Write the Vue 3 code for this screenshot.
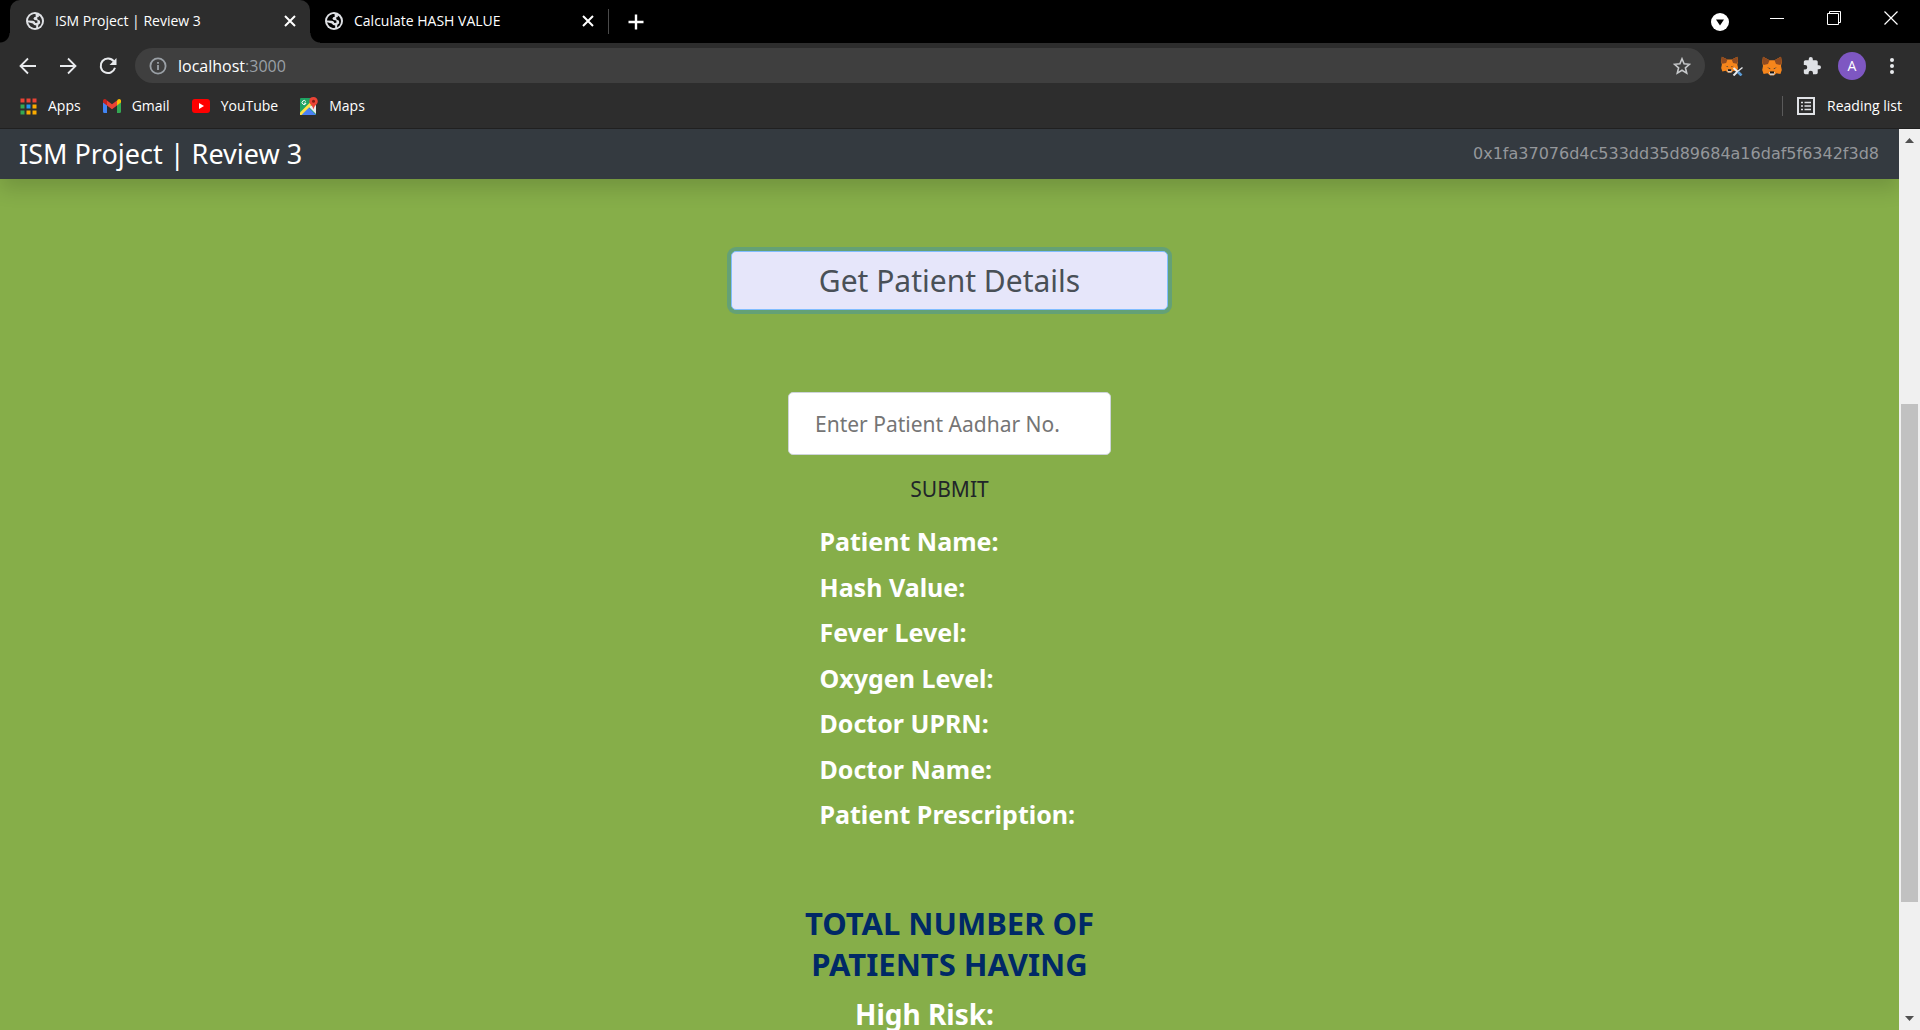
<script setup>
const tabs = [
  { title: 'ISM Project | Review 3', active: true },
  { title: 'Calculate HASH VALUE', active: false },
]
const fields = [
  'Patient Name:',
  'Hash Value:',
  'Fever Level:',
  'Oxygen Level:',
  'Doctor UPRN:',
  'Doctor Name:',
  'Patient Prescription:',
]
const appDots = ['#ea4335', '#ea4335', '#ea4335', '#34a853', '#2196f3', '#fbab00', '#34a853', '#fbab00', '#fbab00']
</script>

<template>
  <div class="browser">
    <header class="tabstrip">
      <div v-for="tab in tabs" :key="tab.title" class="tab" :class="{ active: tab.active }">
        <svg width="18" height="18" viewBox="0 0 18 18">
          <circle cx="9" cy="9" r="9" fill="#dfe1e5" />
          <g :fill="tab.active ? '#2d2d2d' : '#000'">
            <path d="M9.500 2C5.500 1.800 2.400 4.600 2 8.400l4.600.4c1.600.2 2.600.8 2.600 2.200l2.200-.2V8.600L8.600 8 7.400 6.800l.8-1.600 1.600-.4z" />
            <path d="M2.200 10.200C2.900 13.600 5.600 16 9 16l1.200-.2v-2.400l-2-.4-1.400-1.600z" />
            <path d="M12.800 3.400c2 1.300 3.200 3.300 3.200 5.800 0 3-1.700 5.300-4 6.300l.4-2.700 1.800-1.600-.2-2.400-2.400-1.400-.6-1.800 1.800-.6z" />
          </g>
        </svg>
        <span class="tab-title">{{ tab.title }}</span>
        <button class="icon-btn" type="button" aria-label="Close tab">
          <svg width="12" height="12" viewBox="0 0 12 12" stroke="#fff" stroke-width="2"><path d="M1 1l10 10M11 1L1 11" /></svg>
        </button>
      </div>
      <div class="tab-sep"></div>
      <button class="icon-btn new-tab" type="button" aria-label="New tab">
        <svg width="16" height="16" viewBox="0 0 16 16" stroke="#fff" stroke-width="2.400"><path d="M8 .5v15M.5 8h15" /></svg>
      </button>
      <div class="window-controls">
        <button class="icon-btn search-tabs" type="button" aria-label="Search tabs">
          <svg width="18" height="18" viewBox="0 0 18 18"><circle cx="9" cy="9" r="9" fill="#fff" /><path d="M5 6.500h8l-4 6z" fill="#000" /></svg>
        </button>
        <button class="icon-btn" type="button" aria-label="Minimize">
          <svg width="14" height="14" viewBox="0 0 14 14" stroke="#fff"><path d="M0 7.500h14" /></svg>
        </button>
        <button class="icon-btn" type="button" aria-label="Restore">
          <svg width="14" height="14" viewBox="0 0 14 14" fill="none" stroke="#fff"><path d="M.5 2.500h11v11H.5zM2.500 2.500v-2h11v11h-2" /></svg>
        </button>
        <button class="icon-btn" type="button" aria-label="Close">
          <svg width="14" height="14" viewBox="0 0 14 14" stroke="#fff" stroke-width="1.200"><path d="M.5.5l13 13M13.500.5l-13 13" /></svg>
        </button>
      </div>
    </header>

    <div class="toolbar">
      <nav class="history">
        <button class="icon-btn" type="button" aria-label="Back">
          <svg width="18" height="18" viewBox="0 0 18 18" fill="none" stroke="#e8eaed" stroke-width="1.800"><path d="M17 9H2M9 1.500L1.500 9 9 16.500" /></svg>
        </button>
        <button class="icon-btn" type="button" aria-label="Forward">
          <svg width="18" height="18" viewBox="0 0 18 18" fill="none" stroke="#e8eaed" stroke-width="1.800"><path d="M1 9h15M9 1.500L16.500 9 9 16.500" /></svg>
        </button>
        <button class="icon-btn" type="button" aria-label="Reload">
          <svg width="18" height="18" viewBox="0 0 18 18"><path d="M14.800 4.300A7.300 7.300 0 1 0 16 10.800" fill="none" stroke="#e8eaed" stroke-width="2" /><path d="M17.500 1v7h-7z" fill="#e8eaed" /></svg>
        </button>
      </nav>
      <div class="omnibox">
        <svg width="18" height="18" viewBox="0 0 18 18" fill="none" stroke="#9aa0a6" stroke-width="1.800"><circle cx="9" cy="9" r="7.600" /><path d="M9 8v5M9 5v1.800" /></svg>
        <span class="url">localhost<span class="port">:3000</span></span>
        <button class="icon-btn" type="button" aria-label="Bookmark this tab">
          <svg width="18" height="18" viewBox="0 0 18 18" fill="none" stroke="#c6c8ca" stroke-width="1.600"><path d="M9 1.800l2.100 5 5.400.5-4.100 3.500 1.300 5.300L9 13.300l-4.700 2.800 1.300-5.300L1.500 7.300l5.400-.5z" /></svg>
        </button>
      </div>
      <div class="extensions">
        <button v-for="n in 2" :key="n" class="icon-btn" type="button" aria-label="MetaMask">
          <svg width="22" height="20" viewBox="0 0 22 20">
            <g :transform="n === 1 ? 'scale(0.86)' : 'translate(1 0)'">
              <path d="M1 .8l6.500 3.400h5L19 .8l.8 5.200-.8 4 .8 4-1.400 4-3.900-.8-2.300 2H7.800l-2.300-2-3.900.8L.2 14 1 10 .2 6z" fill="#f6851b" />
              <path d="M1 .8l6.500 3.400L6 8 1.600 9 .2 6zM19 .8l-6.500 3.400L14 8l4.400 1 1.400-3z" fill="#8f4a20" />
              <path d="M5 11.200l3.200 1v1zM15 11.200l-3.200 1v1z" fill="#2b3340" />
              <path d="M7 16h6l-1 3.200H8z" fill="#d9cfc7" />
              <path d="M8 15.400h4v2H8z" fill="#161616" />
            </g>
            <g v-if="n === 1" fill="none" stroke-width="2"><path d="M12.500 19.500l4-4" stroke="#e8eaed" /><path d="M16.500 15.500l5-4" stroke="#e8eaed" stroke-width="1.400" /><path d="M12.500 12l4.500 4" stroke="#e8eaed" /><path d="M17 16l3.500 3.500" stroke="#5b9bd5" stroke-width="2.600" /></g>
          </svg>
        </button>
        <button class="icon-btn" type="button" aria-label="Extensions">
          <svg width="18" height="18" viewBox="1 1 22 22" fill="#dfe1e5"><path d="M20.500 11H19V7c0-1.100-.9-2-2-2h-4V3.500a2.500 2.500 0 0 0-5 0V5H4c-1.100 0-2 .9-2 2v3.800h1.500a2.700 2.700 0 0 1 0 5.400H2V20c0 1.100.9 2 2 2h3.800v-1.500a2.700 2.700 0 0 1 5.400 0V22H17c1.100 0 2-.9 2-2v-4h1.500a2.500 2.500 0 0 0 0-5z" /></svg>
        </button>
        <button class="icon-btn avatar" type="button">A</button>
        <button class="icon-btn" type="button" aria-label="Menu">
          <svg width="4" height="16" viewBox="0 0 4 16" fill="#e8eaed"><circle cx="2" cy="2" r="2" /><circle cx="2" cy="8" r="2" /><circle cx="2" cy="14" r="2" /></svg>
        </button>
      </div>
    </div>

    <nav class="bookmarks">
      <a href="#">
        <svg width="17" height="17" viewBox="0 0 17 17"><rect v-for="(c, i) in appDots" :key="i" :x="(i % 3) * 6 + 0.500" :y="Math.floor(i / 3) * 6 + 0.500" width="4" height="4" :fill="c" /></svg>
        Apps
      </a>
      <a href="#">
        <svg width="18" height="14" viewBox="0 0 18 14"><path d="M0 3v9.500c0 .8.500 1.500 1.300 1.500H4V6z" fill="#4285f4" /><path d="M18 3v9.500c0 .8-.5 1.500-1.300 1.500H14V6z" fill="#34a853" /><path d="M4 1.500l5 3.800 5-3.800v5L9 10.300 4 6.500z" fill="#ea4335" /><path d="M0 3V2C0 .2 2-.6 3.400.8L4 1.500v5L0 3.500z" fill="#c5221f" /><path d="M18 3V2c0-1.800-2-2.600-3.400-1.200l-.6.7v5l4-3z" fill="#fbbc04" /></svg>
        Gmail
      </a>
      <a href="#">
        <svg width="18" height="14" viewBox="0 0 18 14"><rect width="18" height="14" rx="3" fill="#f00" /><path d="M7 4l5 3-5 3z" fill="#fff" /></svg>
        YouTube
      </a>
      <a href="#">
        <svg width="18" height="18" viewBox="0 0 18 18"><rect y="1" width="16" height="17" rx="1" fill="#1ea362" /><path d="M16 8v9L8 9z" fill="#e8eaed" /><path d="M1 18l7.500-7.500L16 18z" fill="#4a80f5" /><path d="M0 15.500L11 4.500l2 2L1.500 18H0z" fill="#ffe047" /><path d="M13.500 0A4.300 4.300 0 0 0 9.300 4.300c0 3 3 3.500 4.200 8.200 1.200-4.700 4.300-5.200 4.300-8.200A4.300 4.300 0 0 0 13.500 0z" fill="#ea4335" /><circle cx="13.500" cy="4.200" r="1.500" fill="#7f1d14" /><path d="M5.800 4.500a2 2 0 1 0 .2 1.700H4" fill="none" stroke="#fff" /></svg>
        Maps
      </a>
      <button class="reading-list" type="button">
        <svg width="18" height="18" viewBox="0 0 18 18" fill="none" stroke="#dfe1e5"><path d="M1 1h16v16H1z" stroke-width="2" /><path d="M4 5.500h2M4 9h2M4 12.500h2M7.500 5.500H14M7.500 9H14M7.500 12.500H14" stroke-width="1.600" /></svg>
        Reading list
      </button>
    </nav>

    <div class="viewport">
      <div class="page">
        <nav class="navbar">
          <a class="brand" href="#">ISM Project | Review 3</a>
          <small class="account">0x1fa37076d4c533dd35d89684a16daf5f6342f3d8</small>
        </nav>
        <main class="content">
          <button class="details-btn" type="button">Get Patient Details</button>
          <form class="lookup" @submit.prevent>
            <input class="aadhar" type="text" placeholder="Enter Patient Aadhar No." aria-label="Enter Patient Aadhar No." />
            <button class="submit" type="submit">SUBMIT</button>
          </form>
          <div class="results">
            <p v-for="field in fields" :key="field">{{ field }}</p>
          </div>
          <section class="totals">
            <h2>TOTAL NUMBER OF PATIENTS HAVING</h2>
            <p>High Risk:</p>
          </section>
        </main>
      </div>
      <div class="scrollbar">
        <svg width="9" height="5" viewBox="0 0 9 5" fill="#505050"><path d="M0 5L4.500 0 9 5z" /></svg>
        <div class="track"><div class="thumb"></div></div>
        <svg width="9" height="5" viewBox="0 0 9 5" fill="#505050"><path d="M0 0h9L4.500 5z" /></svg>
      </div>
    </div>
  </div>
</template>

<style>
body {
  margin: 0;
  overflow: hidden;
}
</style>

<style scoped>
* {
  box-sizing: border-box;
}
.browser {
  display: flex;
  flex-direction: column;
  height: 100vh;
  overflow: hidden;
  background: #2d2d2d;
  color: #fff;
  font: 14px/20px "Open Sans", "Noto Sans", sans-serif;
}
svg {
  display: block;
  flex: none;
}
button {
  margin: 0;
  padding: 0;
  border: 0;
  background: none;
  color: inherit;
  font: inherit;
}
a {
  color: inherit;
  text-decoration: none;
}
.icon-btn {
  display: flex;
  align-items: center;
  justify-content: center;
}
.tabstrip {
  display: flex;
  align-items: center;
  height: 43px;
  padding-left: 10px;
  background: #000;
}
.tab {
  display: flex;
  align-items: center;
  width: 300px;
  height: 43px;
  padding: 0 14px 2px 16px;
}
.tab.active {
  position: relative;
  border-radius: 10px 10px 0 0;
  background: #2d2d2d;
}
.tab.active::before,
.tab.active::after {
  content: "";
  position: absolute;
  bottom: 0;
  width: 10px;
  height: 10px;
}
.tab.active::before {
  right: 100%;
  background: radial-gradient(circle at 0 0, #000 9px, #2d2d2d 10px);
}
.tab.active::after {
  left: 100%;
  background: radial-gradient(circle at 100% 0, #000 9px, #2d2d2d 10px);
}
.tab-title {
  flex: 1;
  margin-left: 11px;
}
.tab:not(.active) {
  width: 298px;
  padding-left: 15px;
}
.tab-sep {
  width: 1px;
  height: 25px;
  background: #4a4a4a;
}
.new-tab {
  margin-left: 19px;
}
.window-controls {
  display: flex;
  align-items: center;
  gap: 43px;
  height: 36px;
  margin-left: auto;
  margin-right: 22px;
  align-self: flex-start;
}
.search-tabs {
  width: 14px;
  margin-top: 8px;
}
.toolbar {
  display: flex;
  align-items: center;
  height: 45px;
  padding: 0 14px 0 19px;
}
.history {
  display: flex;
  gap: 22px;
}
.omnibox {
  display: flex;
  flex: 1;
  align-items: center;
  height: 35px;
  margin-left: 18px;
  padding: 0 14px;
  border-radius: 18px;
  background: #3f3f3f;
}
.url {
  flex: 1;
  margin-left: 11px;
  font-size: 16px;
}
.port {
  color: #9aa0a6;
}
.extensions {
  display: flex;
  align-items: center;
  gap: 12px;
  margin-left: 13px;
}
.extensions .icon-btn {
  width: 28px;
  height: 28px;
}
.avatar {
  border-radius: 50%;
  background: #7e57c2;
}
.bookmarks {
  display: flex;
  align-items: center;
  height: 41px;
  padding: 0 18px 4px 20px;
  border-bottom: 1px solid #202020;
}
.bookmarks a {
  display: flex;
  align-items: center;
  gap: 11px;
  margin-right: 22px;
}
.reading-list {
  display: flex;
  align-items: center;
  gap: 12px;
  height: 20px;
  margin-left: auto;
  padding-left: 14px;
  border-left: 1px solid #5a5a5a;
}
.viewport {
  display: flex;
  flex: 1;
  min-height: 0;
  font-family: "Noto Sans", sans-serif;
}
.page {
  flex: 1;
  overflow: hidden;
  background: #86ae49;
}
.navbar {
  display: flex;
  align-items: center;
  justify-content: space-between;
  height: 50px;
  padding: 0 20px 0 19px;
  background: #343a40;
  box-shadow: 0 10px 20px rgba(0, 0, 0, 0.15);
}
.brand {
  font-size: 27px;
}
.account {
  color: #94979b;
  font-family: "DejaVu Sans", sans-serif;
  font-size: 16px;
}
.content {
  display: flex;
  flex-direction: column;
  align-items: center;
  padding-top: 72px;
}
.details-btn {
  width: 437px;
  height: 59px;
  border: 1px solid #80bdff;
  border-radius: 5px;
  background: #e6e6fa;
  box-shadow: 0 0 0 4px rgba(0, 123, 255, 0.25);
  color: #495057;
  font-size: 30px;
}
.lookup {
  display: flex;
  flex-direction: column;
  align-items: center;
  margin-top: 82px;
}
.aadhar {
  width: 323px;
  height: 63px;
  padding: 0 26px;
  border: 1px solid #ced4da;
  border-radius: 5px;
  background: #fff;
  font: 21px "Noto Sans", sans-serif;
}
.aadhar::placeholder {
  color: #757575;
}
.submit {
  margin-top: 14px;
  color: #212529;
  font-size: 21px;
  line-height: 40px;
}
.results {
  width: 260px;
  margin-top: 14px;
  font-size: 25px;
  font-weight: 700;
  line-height: 1.5;
  white-space: nowrap;
}
.results p {
  margin: 0 0 8px;
}
.totals {
  width: 323px;
  margin-top: 61px;
  font-weight: 700;
}
.totals h2 {
  margin: 0;
  color: #002966;
  font-size: 31px;
  line-height: 41px;
  text-align: center;
}
.totals p {
  margin: 13px 0 0 67px;
  font-size: 28px;
  line-height: 32px;
}
.scrollbar {
  display: flex;
  flex-direction: column;
  align-items: center;
  width: 21px;
  padding: 9px 0;
  background: #f0f0f0;
}
.track {
  flex: 1;
  width: 17px;
  margin: 7px 0;
}
.thumb {
  height: 58%;
  margin-top: 254px;
  background: #c1c1c1;
}
</style>
